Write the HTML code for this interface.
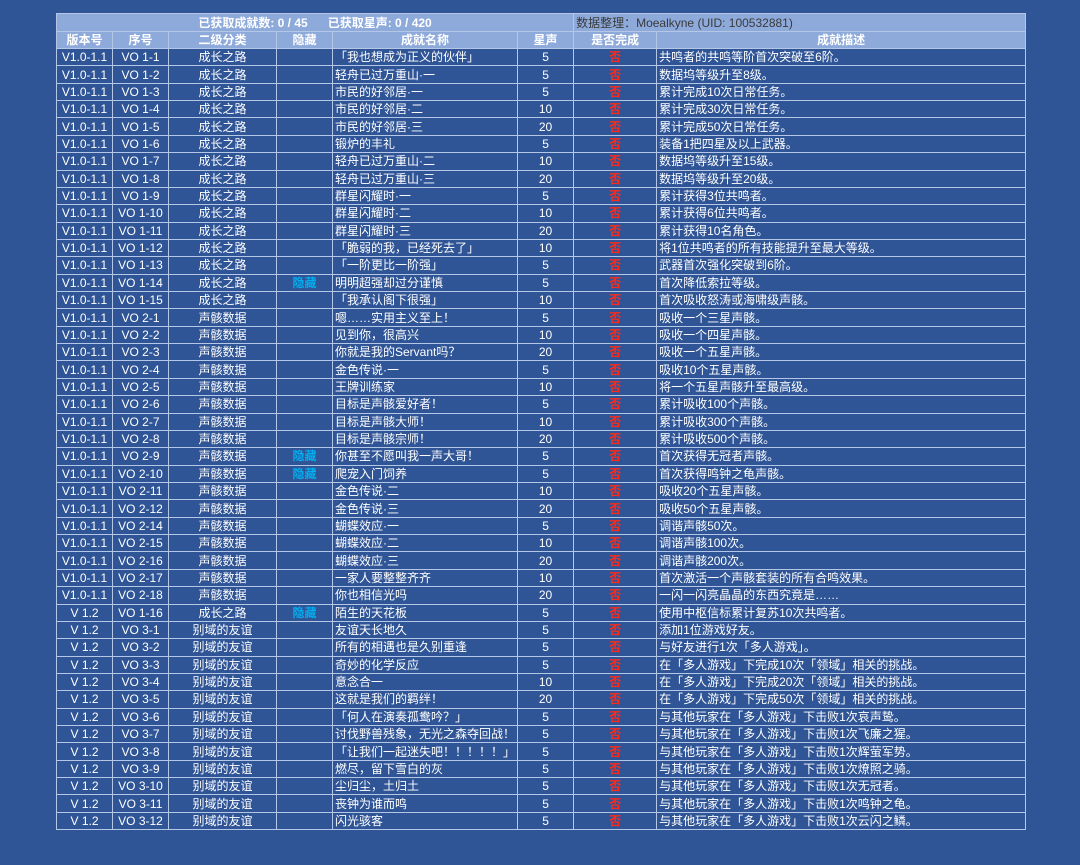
<!DOCTYPE html>
<html><head><meta charset="utf-8"><style>
body{margin:0;background:#2f5597;width:1080px;height:865px;overflow:hidden;font-family:"Liberation Sans","Noto Sans CJK SC",sans-serif;}
table{position:absolute;left:56px;top:13px;width:969px;border-collapse:collapse;table-layout:fixed;color:#fff;font-size:12px;}
td{border:1px solid #b4c7e7;height:16.36px;padding:0 2px;text-align:center;white-space:nowrap;overflow:hidden;line-height:16px;}
tr.h td{background:#8eaadb;font-weight:bold;height:16px;}
tr.t td{background:#8eaadb;height:17px;}
td.l{text-align:left;}
td.r{color:#ff2a1a;font-weight:bold;}
td.c{color:#00b0f0;font-weight:bold;}
td.g{color:#3a3a3a;font-weight:normal;text-align:left;}
</style></head><body>
<table>
<colgroup><col style="width:56px"><col style="width:56px"><col style="width:108px"><col style="width:56px"><col style="width:185px"><col style="width:56px"><col style="width:83px"><col style="width:369px"></colgroup>
<tr class="t"><td colspan="6" style="font-weight:bold">已获取成就数: 0 / 45 &nbsp;&nbsp;&nbsp;&nbsp; 已获取星声: 0 / 420</td><td colspan="2" class="g">数据整理：Moealkyne (UID: 100532881)</td></tr>
<tr class="h"><td>版本号</td><td>序号</td><td>二级分类</td><td>隐藏</td><td>成就名称</td><td>星声</td><td>是否完成</td><td>成就描述</td></tr>
<tr><td>V1.0-1.1</td><td>VO 1-1</td><td>成长之路</td><td></td><td class="l">「我也想成为正义的伙伴」</td><td>5</td><td class="r">否</td><td class="l">共鸣者的共鸣等阶首次突破至6阶。</td></tr>
<tr><td>V1.0-1.1</td><td>VO 1-2</td><td>成长之路</td><td></td><td class="l">轻舟已过万重山·一</td><td>5</td><td class="r">否</td><td class="l">数据坞等级升至8级。</td></tr>
<tr><td>V1.0-1.1</td><td>VO 1-3</td><td>成长之路</td><td></td><td class="l">市民的好邻居·一</td><td>5</td><td class="r">否</td><td class="l">累计完成10次日常任务。</td></tr>
<tr><td>V1.0-1.1</td><td>VO 1-4</td><td>成长之路</td><td></td><td class="l">市民的好邻居·二</td><td>10</td><td class="r">否</td><td class="l">累计完成30次日常任务。</td></tr>
<tr><td>V1.0-1.1</td><td>VO 1-5</td><td>成长之路</td><td></td><td class="l">市民的好邻居·三</td><td>20</td><td class="r">否</td><td class="l">累计完成50次日常任务。</td></tr>
<tr><td>V1.0-1.1</td><td>VO 1-6</td><td>成长之路</td><td></td><td class="l">锻炉的丰礼</td><td>5</td><td class="r">否</td><td class="l">装备1把四星及以上武器。</td></tr>
<tr><td>V1.0-1.1</td><td>VO 1-7</td><td>成长之路</td><td></td><td class="l">轻舟已过万重山·二</td><td>10</td><td class="r">否</td><td class="l">数据坞等级升至15级。</td></tr>
<tr><td>V1.0-1.1</td><td>VO 1-8</td><td>成长之路</td><td></td><td class="l">轻舟已过万重山·三</td><td>20</td><td class="r">否</td><td class="l">数据坞等级升至20级。</td></tr>
<tr><td>V1.0-1.1</td><td>VO 1-9</td><td>成长之路</td><td></td><td class="l">群星闪耀时·一</td><td>5</td><td class="r">否</td><td class="l">累计获得3位共鸣者。</td></tr>
<tr><td>V1.0-1.1</td><td>VO 1-10</td><td>成长之路</td><td></td><td class="l">群星闪耀时·二</td><td>10</td><td class="r">否</td><td class="l">累计获得6位共鸣者。</td></tr>
<tr><td>V1.0-1.1</td><td>VO 1-11</td><td>成长之路</td><td></td><td class="l">群星闪耀时·三</td><td>20</td><td class="r">否</td><td class="l">累计获得10名角色。</td></tr>
<tr><td>V1.0-1.1</td><td>VO 1-12</td><td>成长之路</td><td></td><td class="l">「脆弱的我，已经死去了」</td><td>10</td><td class="r">否</td><td class="l">将1位共鸣者的所有技能提升至最大等级。</td></tr>
<tr><td>V1.0-1.1</td><td>VO 1-13</td><td>成长之路</td><td></td><td class="l">「一阶更比一阶强」</td><td>5</td><td class="r">否</td><td class="l">武器首次强化突破到6阶。</td></tr>
<tr><td>V1.0-1.1</td><td>VO 1-14</td><td>成长之路</td><td class="c">隐藏</td><td class="l">明明超强却过分谨慎</td><td>5</td><td class="r">否</td><td class="l">首次降低索拉等级。</td></tr>
<tr><td>V1.0-1.1</td><td>VO 1-15</td><td>成长之路</td><td></td><td class="l">「我承认阁下很强」</td><td>10</td><td class="r">否</td><td class="l">首次吸收怒涛或海啸级声骸。</td></tr>
<tr><td>V1.0-1.1</td><td>VO 2-1</td><td>声骸数据</td><td></td><td class="l">嗯……实用主义至上！</td><td>5</td><td class="r">否</td><td class="l">吸收一个三星声骸。</td></tr>
<tr><td>V1.0-1.1</td><td>VO 2-2</td><td>声骸数据</td><td></td><td class="l">见到你，很高兴</td><td>10</td><td class="r">否</td><td class="l">吸收一个四星声骸。</td></tr>
<tr><td>V1.0-1.1</td><td>VO 2-3</td><td>声骸数据</td><td></td><td class="l">你就是我的Servant吗？</td><td>20</td><td class="r">否</td><td class="l">吸收一个五星声骸。</td></tr>
<tr><td>V1.0-1.1</td><td>VO 2-4</td><td>声骸数据</td><td></td><td class="l">金色传说·一</td><td>5</td><td class="r">否</td><td class="l">吸收10个五星声骸。</td></tr>
<tr><td>V1.0-1.1</td><td>VO 2-5</td><td>声骸数据</td><td></td><td class="l">王牌训练家</td><td>10</td><td class="r">否</td><td class="l">将一个五星声骸升至最高级。</td></tr>
<tr><td>V1.0-1.1</td><td>VO 2-6</td><td>声骸数据</td><td></td><td class="l">目标是声骸爱好者！</td><td>5</td><td class="r">否</td><td class="l">累计吸收100个声骸。</td></tr>
<tr><td>V1.0-1.1</td><td>VO 2-7</td><td>声骸数据</td><td></td><td class="l">目标是声骸大师！</td><td>10</td><td class="r">否</td><td class="l">累计吸收300个声骸。</td></tr>
<tr><td>V1.0-1.1</td><td>VO 2-8</td><td>声骸数据</td><td></td><td class="l">目标是声骸宗师！</td><td>20</td><td class="r">否</td><td class="l">累计吸收500个声骸。</td></tr>
<tr><td>V1.0-1.1</td><td>VO 2-9</td><td>声骸数据</td><td class="c">隐藏</td><td class="l">你甚至不愿叫我一声大哥！</td><td>5</td><td class="r">否</td><td class="l">首次获得无冠者声骸。</td></tr>
<tr><td>V1.0-1.1</td><td>VO 2-10</td><td>声骸数据</td><td class="c">隐藏</td><td class="l">爬宠入门饲养</td><td>5</td><td class="r">否</td><td class="l">首次获得鸣钟之龟声骸。</td></tr>
<tr><td>V1.0-1.1</td><td>VO 2-11</td><td>声骸数据</td><td></td><td class="l">金色传说·二</td><td>10</td><td class="r">否</td><td class="l">吸收20个五星声骸。</td></tr>
<tr><td>V1.0-1.1</td><td>VO 2-12</td><td>声骸数据</td><td></td><td class="l">金色传说·三</td><td>20</td><td class="r">否</td><td class="l">吸收50个五星声骸。</td></tr>
<tr><td>V1.0-1.1</td><td>VO 2-14</td><td>声骸数据</td><td></td><td class="l">蝴蝶效应·一</td><td>5</td><td class="r">否</td><td class="l">调谐声骸50次。</td></tr>
<tr><td>V1.0-1.1</td><td>VO 2-15</td><td>声骸数据</td><td></td><td class="l">蝴蝶效应·二</td><td>10</td><td class="r">否</td><td class="l">调谐声骸100次。</td></tr>
<tr><td>V1.0-1.1</td><td>VO 2-16</td><td>声骸数据</td><td></td><td class="l">蝴蝶效应·三</td><td>20</td><td class="r">否</td><td class="l">调谐声骸200次。</td></tr>
<tr><td>V1.0-1.1</td><td>VO 2-17</td><td>声骸数据</td><td></td><td class="l">一家人要整整齐齐</td><td>10</td><td class="r">否</td><td class="l">首次激活一个声骸套装的所有合鸣效果。</td></tr>
<tr><td>V1.0-1.1</td><td>VO 2-18</td><td>声骸数据</td><td></td><td class="l">你也相信光吗</td><td>20</td><td class="r">否</td><td class="l">一闪一闪亮晶晶的东西究竟是……</td></tr>
<tr><td>V 1.2</td><td>VO 1-16</td><td>成长之路</td><td class="c">隐藏</td><td class="l">陌生的天花板</td><td>5</td><td class="r">否</td><td class="l">使用中枢信标累计复苏10次共鸣者。</td></tr>
<tr><td>V 1.2</td><td>VO 3-1</td><td>别域的友谊</td><td></td><td class="l">友谊天长地久</td><td>5</td><td class="r">否</td><td class="l">添加1位游戏好友。</td></tr>
<tr><td>V 1.2</td><td>VO 3-2</td><td>别域的友谊</td><td></td><td class="l">所有的相遇也是久别重逢</td><td>5</td><td class="r">否</td><td class="l">与好友进行1次「多人游戏」。</td></tr>
<tr><td>V 1.2</td><td>VO 3-3</td><td>别域的友谊</td><td></td><td class="l">奇妙的化学反应</td><td>5</td><td class="r">否</td><td class="l">在「多人游戏」下完成10次「领域」相关的挑战。</td></tr>
<tr><td>V 1.2</td><td>VO 3-4</td><td>别域的友谊</td><td></td><td class="l">意念合一</td><td>10</td><td class="r">否</td><td class="l">在「多人游戏」下完成20次「领域」相关的挑战。</td></tr>
<tr><td>V 1.2</td><td>VO 3-5</td><td>别域的友谊</td><td></td><td class="l">这就是我们的羁绊！</td><td>20</td><td class="r">否</td><td class="l">在「多人游戏」下完成50次「领域」相关的挑战。</td></tr>
<tr><td>V 1.2</td><td>VO 3-6</td><td>别域的友谊</td><td></td><td class="l">「何人在演奏孤鸯吟？」</td><td>5</td><td class="r">否</td><td class="l">与其他玩家在「多人游戏」下击败1次哀声鸷。</td></tr>
<tr><td>V 1.2</td><td>VO 3-7</td><td>别域的友谊</td><td></td><td class="l">讨伐野兽残象，无光之森夺回战！</td><td>5</td><td class="r">否</td><td class="l">与其他玩家在「多人游戏」下击败1次飞廉之猩。</td></tr>
<tr><td>V 1.2</td><td>VO 3-8</td><td>别域的友谊</td><td></td><td class="l">「让我们一起迷失吧！！！！！」</td><td>5</td><td class="r">否</td><td class="l">与其他玩家在「多人游戏」下击败1次辉萤军势。</td></tr>
<tr><td>V 1.2</td><td>VO 3-9</td><td>别域的友谊</td><td></td><td class="l">燃尽，留下雪白的灰</td><td>5</td><td class="r">否</td><td class="l">与其他玩家在「多人游戏」下击败1次燎照之骑。</td></tr>
<tr><td>V 1.2</td><td>VO 3-10</td><td>别域的友谊</td><td></td><td class="l">尘归尘，土归土</td><td>5</td><td class="r">否</td><td class="l">与其他玩家在「多人游戏」下击败1次无冠者。</td></tr>
<tr><td>V 1.2</td><td>VO 3-11</td><td>别域的友谊</td><td></td><td class="l">丧钟为谁而鸣</td><td>5</td><td class="r">否</td><td class="l">与其他玩家在「多人游戏」下击败1次鸣钟之龟。</td></tr>
<tr><td>V 1.2</td><td>VO 3-12</td><td>别域的友谊</td><td></td><td class="l">闪光骇客</td><td>5</td><td class="r">否</td><td class="l">与其他玩家在「多人游戏」下击败1次云闪之鳞。</td></tr>
</table>
</body></html>
